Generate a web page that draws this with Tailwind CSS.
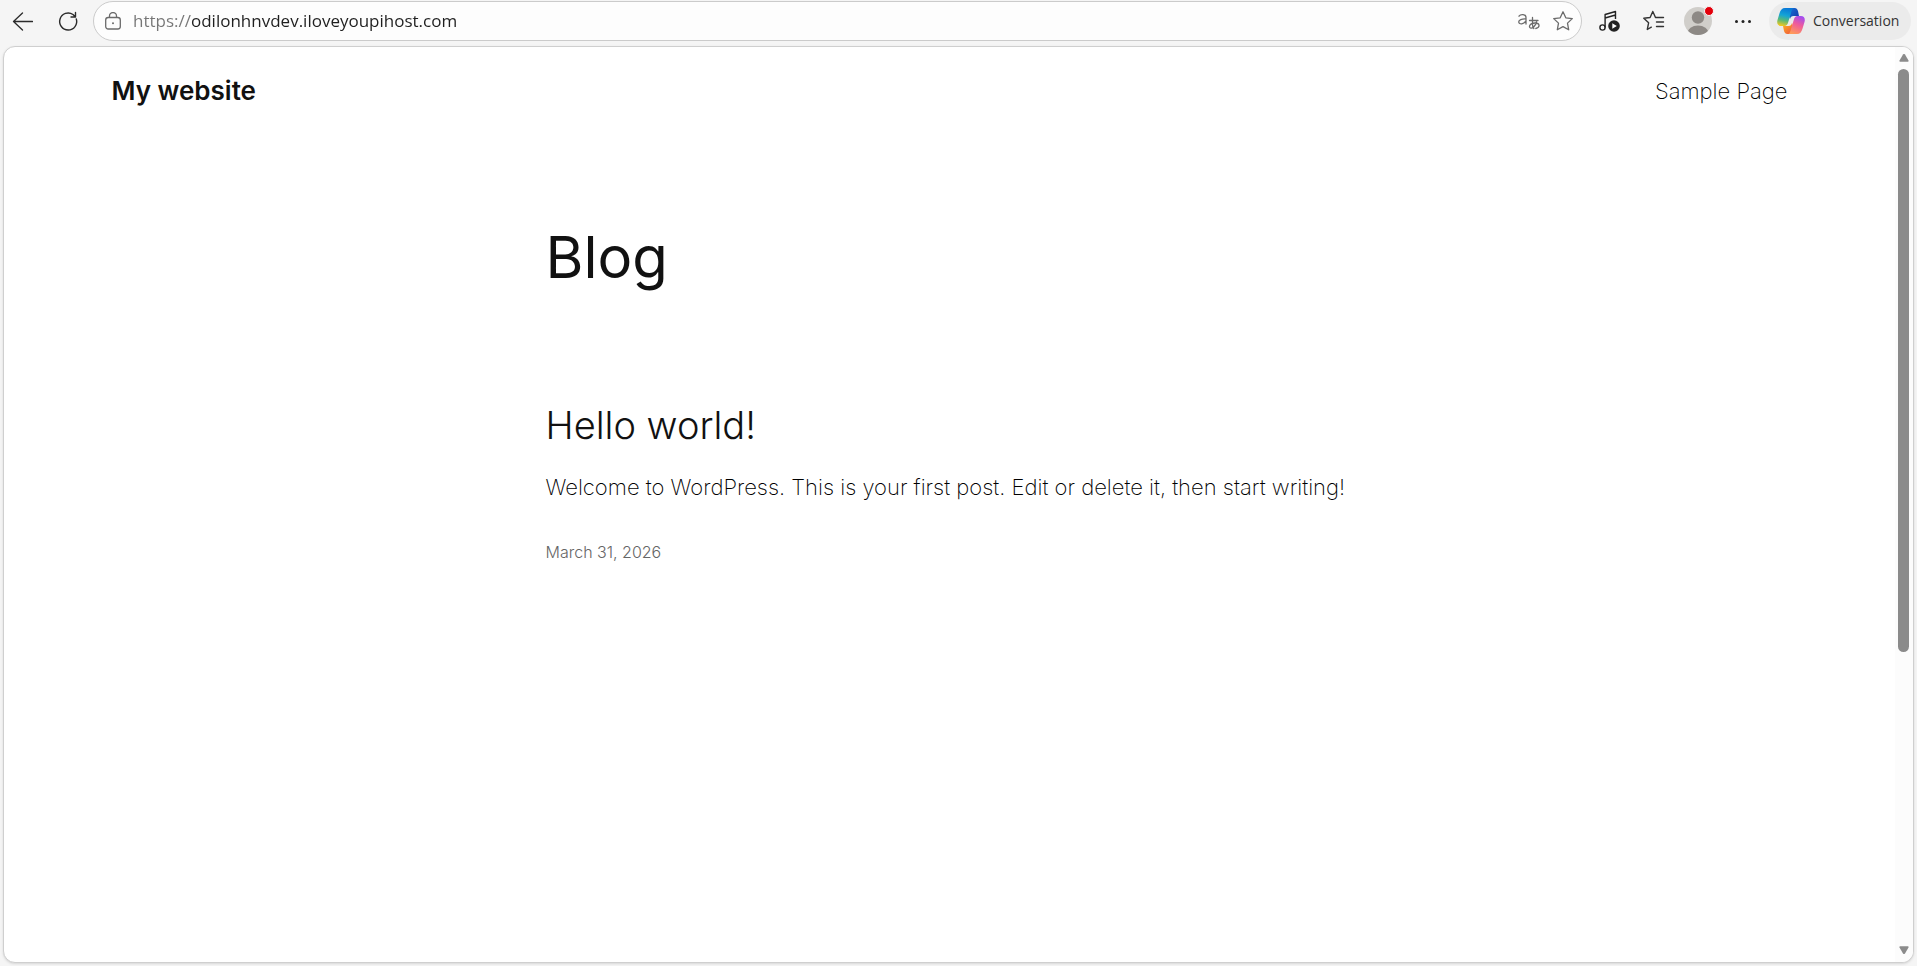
<!DOCTYPE html>
<html lang="en">
<head>
<meta charset="utf-8">
<title>My website</title>
<script src="https://cdn.jsdelivr.net/npm/@tailwindcss/browser@4"></script>
</head>
<body class="flex h-screen flex-col overflow-hidden bg-[#f5f5f5] pr-[3px] pb-[3px] pl-[3px] font-['Inter',sans-serif] text-[#111]">
  <div class="flex h-[46px] shrink-0 items-start pt-px pr-[3px] font-['Open_Sans',sans-serif] text-[#2b2b2b]">
    <div class="flex h-10 w-[90px] shrink-0 items-center gap-[22px] pl-1.5">
      <button aria-label="Back" class="size-6"><svg viewBox="0 0 24 24" class="size-6" fill="none" stroke="currentColor" stroke-width="1.3" stroke-linecap="round" stroke-linejoin="round"><path d="M23.500 12.500H4.500M13.500 4 4.500 12.500 13.500 21"/></svg></button>
      <button aria-label="Refresh" class="size-6"><svg viewBox="0 0 24 24" class="size-6" fill="none" stroke="currentColor" stroke-width="1.4" stroke-linecap="round" stroke-linejoin="round"><path d="M21.300 10A8.500 8.500 0 1 1 18 5.500L20 7.500M20.500 3.500V8H16"/></svg></button>
    </div>
    <div class="flex h-10 flex-1 items-center rounded-full border border-[#cbcbcb] bg-[#fdfdfd] pr-2 pl-[11px] text-[#6b6b6b]">
      <button aria-label="Site information" class="size-4"><svg viewBox="0 0 16 18" class="-mt-px h-[18px] w-4" fill="none" stroke="currentColor" stroke-width="1.3"><rect x=".7" y="5.500" width="14.600" height="11.500" rx="2.500"/><path d="M4.500 5.500V4a3.500 3.500 0 0 1 7 0v1.500"/><circle cx="8" cy="11.300" r="1" fill="currentColor" stroke="none"/></svg></button>
      <input aria-label="Address" type="text" value="https://odilonhnvdev.iloveyoupihost.com" class="ml-3 h-8 flex-1 bg-[linear-gradient(90deg,#767676_58px,#1f1f1f_58px)] bg-clip-text pb-0.5 text-[17px] text-transparent outline-none">
      <button aria-label="Translate" class="mr-3 h-6 w-6"><svg viewBox="0 0 24 24" class="size-6" fill="none" stroke="currentColor" stroke-width="1.300" stroke-linecap="round"><path d="M2 7.200C3.500 5 9 4.700 9 8.700V15M9 10C5 9.700 1.600 11 1.700 13c.3 2.900 5.500 2.300 7.300-1.200M12.500 11.500h8.500M15.500 8.500v7c0 2 .5 3 1.300 4M19.500 12.800c-1 4-4 7-6 6.200s-1.200-5 4.500-5c5.500 0 5 4.800.8 5.500"/></svg></button>
      <button aria-label="Add to favorites" class="size-5"><svg viewBox="0 0 20 20" class="size-5" fill="none" stroke="currentColor" stroke-width="1.300" stroke-linejoin="round"><path d="m10 .8 2.800 6 6.500.8-4.800 4.500 1.200 6.700L10 15.600l-5.700 3.200 1.200-6.700L.7 7.600l6.500-.8z"/></svg></button>
    </div>
    <div class="ml-4 flex h-10 shrink-0 items-center">
      <button aria-label="Media control" class="size-6"><svg viewBox="0 0 24 24" class="size-6" fill="none" stroke="#222" stroke-width="1.400" stroke-linejoin="round"><circle cx="4.500" cy="18.500" r="2.600"/><path d="M7.100 18.500V5.500L17.500 2.500V10M7.100 9 17.500 6"/><circle cx="16" cy="17" r="5.800" fill="#222" stroke="none"/><path d="m14.300 14.300 4.500 2.700-4.500 2.700z" fill="#fff" stroke="none"/></svg></button>
      <button aria-label="Favorites" class="ml-5 size-6"><svg viewBox="0 0 24 24" class="size-6" fill="none" stroke="#333" stroke-width="1.400" stroke-linejoin="round" stroke-linecap="round"><path d="m13.500 8.500-2.700-6-2.700 6-6.300.8 4.800 4.500-1.300 6.700 4-2.300M13.500 8.500h8M14.500 13h7M14.500 17.500h7"/></svg></button>
      <button aria-label="Profile" class="relative ml-[18px] size-7"><svg viewBox="0 0 28 28" class="size-7"><defs><clipPath id="face"><circle cx="14" cy="14" r="14"/></clipPath></defs><g clip-path="url(#face)"><path fill="#d0ceca" d="M0 0h28v28H0z"/><circle cx="14" cy="10.500" r="6.200" fill="#8d8985"/><ellipse cx="14" cy="26" rx="10.500" ry="7.500" fill="#8d8985"/></g></svg><span class="absolute -top-px -right-0.5 size-[10px] rounded-full border border-[#f5f5f5] bg-[#e3000b]"></span></button>
      <button aria-label="Settings and more" class="ml-[19px] size-6"><svg viewBox="0 0 24 24" class="size-6" fill="#222"><circle cx="5.500" cy="12.500" r="1.500"/><circle cx="12" cy="12.500" r="1.500"/><circle cx="18.500" cy="12.500" r="1.500"/></svg></button>
      <button class="ml-3.5 flex h-[38px] w-[142px] items-center gap-2 rounded-full bg-[#ebebeb] pl-2 text-sm whitespace-nowrap text-[#333]">
        <svg viewBox="0 0 28 26" class="h-[26px] w-7 shrink-0"><defs>
          <linearGradient id="a" x1=".5" y1="0" x2=".3" y2="1"><stop stop-color="#0878d8"/><stop offset=".4" stop-color="#14a4d6"/><stop offset=".68" stop-color="#58b978"/><stop offset="1" stop-color="#f5c81c"/></linearGradient>
          <linearGradient id="b" x1=".7" y1="0" x2=".3" y2="1"><stop stop-color="#a34cf0"/><stop offset=".45" stop-color="#ef5b9b"/><stop offset="1" stop-color="#ff9b58"/></linearGradient>
          <linearGradient id="c" x1="0" y1="0" x2="1" y2=".6"><stop stop-color="#147be0"/><stop offset="1" stop-color="#1742b0"/></linearGradient>
          <linearGradient id="d" x1="0" y1="0" x2="1" y2="1"><stop stop-color="#ffb51c"/><stop offset="1" stop-color="#eb4545"/></linearGradient></defs>
          <path fill="url(#c)" d="M9 0h8.500c2.300 0 3 1.500 3.600 3.500L22 8h-5.500c-2 0-3 1-3.500 3z"/>
          <path fill="url(#d)" d="M19 26h-8.500c-2.300 0-3-1.500-3.600-3.500L6 18h5.500c2 0 3-1 3.500-3z"/>
          <path fill="url(#a)" d="M16.500 0H8C5 0 3.500 2 2.600 5L.5 12c-1 3.500.5 6 3.500 6h3.500c2 0 3-1.500 3.600-3.500L14 5c.7-2.500 1-4 2.500-5z"/>
          <path fill="url(#b)" d="M11.500 26H20c3 0 4.500-2 5.400-5l2.100-7c1-3.500-.5-6-3.500-6h-3.500c-2 0-3 1.500-3.600 3.500L14 21c-.7 2.500-1 4-2.500 5z"/>
        </svg>
        Conversation
      </button>
    </div>
  </div>

  <div class="flex min-h-0 flex-1 overflow-hidden rounded-xl border border-[#cfcfcf] bg-white shadow-sm">
    <div class="min-w-0 flex-1">
      <header class="mx-auto flex max-w-[1676px] items-center justify-between pt-6">
        <a href="#" class="text-[26px] leading-10 font-semibold">My website</a>
        <nav><a href="#" class="text-[22px] leading-10 font-extralight text-black">Sample Page</a></nav>
      </header>
      <main class="mx-auto max-w-[808px] pt-[110px]">
        <h1 class="text-[58px] leading-[72px] font-normal">Blog</h1>
        <article class="pt-[108px]">
          <h2 class="text-[38px] leading-12 font-light"><a href="#">Hello world!</a></h2>
          <p class="pt-5 text-[22px] leading-9 font-extralight whitespace-nowrap text-black">Welcome to WordPress. This is your first post. Edit or delete it, then start writing!</p>
          <time datetime="2026-03-31" class="block pt-[33px] text-base leading-7 font-light text-[#666]"><a href="#">March 31, 2026</a></time>
        </article>
      </main>
    </div>
    <div class="flex w-[18px] shrink-0 flex-col items-center bg-[#fcfcfc] pt-[7px] pb-2 pr-px" aria-hidden="true">
      <svg viewBox="0 0 10 8" class="h-2 w-2.5 shrink-0" fill="#8b8b8b"><path d="M4 .6a1.200 1.200 0 0 1 2 0L9.500 6.500Q10 7.700 8.800 7.700H1.200Q0 7.700.5 6.500z"/></svg>
      <div class="flex w-[11px] flex-1 flex-col py-[7px]"><div class="h-[67%] rounded-full bg-[#8b8b8b]"></div></div>
      <svg viewBox="0 0 10 8" class="h-2 w-2.5 shrink-0" fill="#8b8b8b"><path d="M4 7.400a1.200 1.200 0 0 0 2 0L9.500 1.500Q10 .3 8.800.3H1.200Q0 .3.500 1.500z"/></svg>
    </div>
  </div>
</body>
</html>
